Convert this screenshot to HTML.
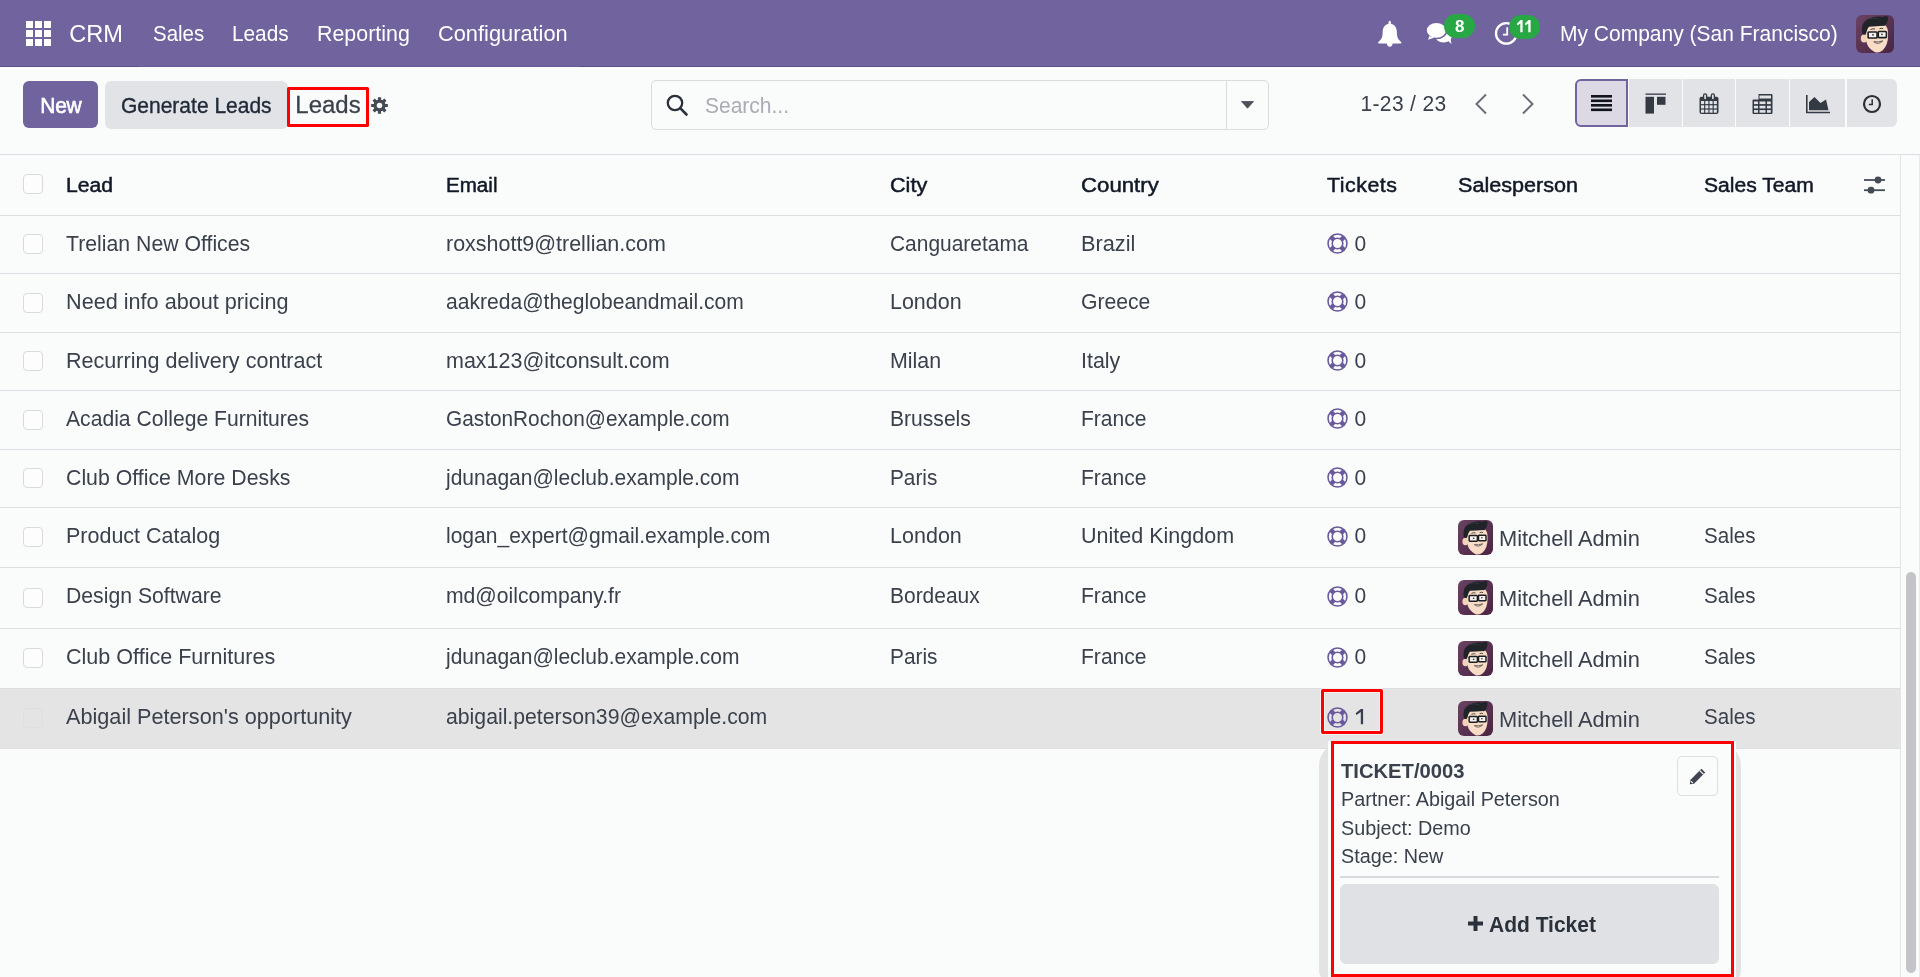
<!DOCTYPE html>
<html><head><meta charset="utf-8">
<style>
html,body{margin:0;padding:0;}
body{width:1920px;height:977px;overflow:hidden;position:relative;background:#fafbfb;font-family:"Liberation Sans", sans-serif;}
.t{position:absolute;white-space:nowrap;line-height:1;}
.abs{position:absolute;}
</style></head><body>

<div class="abs" style="left:0;top:0;width:1920px;height:66px;background:#71639e;border-bottom:1px solid #5c4f86"></div>
<div class="abs" style="left:138px;top:66px;width:442px;height:1px;background:#6a5b98"></div>
<div class="abs" style="left:26px;top:21px;width:7px;height:7px;background:#fff"></div><div class="abs" style="left:35px;top:21px;width:7px;height:7px;background:#fff"></div><div class="abs" style="left:44px;top:21px;width:7px;height:7px;background:#fff"></div><div class="abs" style="left:26px;top:30px;width:7px;height:7px;background:#fff"></div><div class="abs" style="left:35px;top:30px;width:7px;height:7px;background:#fff"></div><div class="abs" style="left:44px;top:30px;width:7px;height:7px;background:#fff"></div><div class="abs" style="left:26px;top:39px;width:7px;height:7px;background:#fff"></div><div class="abs" style="left:35px;top:39px;width:7px;height:7px;background:#fff"></div><div class="abs" style="left:44px;top:39px;width:7px;height:7px;background:#fff"></div>
<div class="t" style="left:69.2px;top:23.42px;font-size:23.6px;color:#fff;font-weight:normal;transform:scale(1.0,1.02);transform-origin:0 19.98px;">CRM</div>
<div class="t" style="left:153px;top:23.12px;font-size:21px;color:#fff;font-weight:normal;transform:scale(0.975,1.035);transform-origin:0 17.78px;">Sales</div>
<div class="t" style="left:232px;top:23.12px;font-size:21px;color:#fff;font-weight:normal;transform:scale(0.99,1.035);transform-origin:0 17.78px;">Leads</div>
<div class="t" style="left:317px;top:23.12px;font-size:21px;color:#fff;font-weight:normal;transform:scale(1.019,1.035);transform-origin:0 17.78px;">Reporting</div>
<div class="t" style="left:438px;top:23.12px;font-size:21px;color:#fff;font-weight:normal;transform:scale(1.038,1.035);transform-origin:0 17.78px;">Configuration</div>
<svg class="abs" style="left:1370px;top:15px" width="40" height="37" viewBox="0 0 40 37"><path fill="#fff" d="M19.7 5.8 C18.7 5.8 18.3 7.3 18.6 8.7 C14.8 9.5 12.9 12.6 12.7 16.5 L12.5 20 C12.3 23 10.6 25.1 8.4 27.1 C7.7 27.7 8.1 28.4 9 28.4 L30.6 28.4 C31.4 28.4 31.8 27.7 31.1 27.1 C28.9 25.1 27.2 23 27 20 L26.8 16.5 C26.6 12.6 24.7 9.5 20.9 8.7 C21.1 7.3 20.8 5.8 19.7 5.8 Z M16.8 28.2 C16.8 30 18.1 31.8 19.75 31.8 C21.4 31.8 22.7 30 22.7 28.2 Z"/></svg>
<svg class="abs" style="left:1420px;top:10px" width="40" height="40" viewBox="0 0 40 40"><ellipse cx="23.5" cy="26" rx="8.6" ry="6.4" fill="#fff"/><path d="M27 30 L31.5 34 L30.5 28.5 Z" fill="#fff"/>
<ellipse cx="16.4" cy="20.3" rx="10.4" ry="8.2" fill="#fff" stroke="#71639e" stroke-width="1.6"/><path d="M9.5 26 L8 29.8 L14.5 27.5 Z" fill="#fff"/></svg>
<div class="abs" style="left:1444px;top:14px;width:31px;height:24px;border-radius:12px;background:#28a745"></div>
<div class="t" style="left:1455px;top:18.21px;font-size:17px;color:#fff;font-weight:bold;transform:scale(1.0,1.001);transform-origin:0 14.39px;">8</div>
<svg class="abs" style="left:1494px;top:21px" width="24" height="24" viewBox="0 0 24 24"><circle cx="12.3" cy="12.4" r="10.3" fill="none" stroke="#fff" stroke-width="2.3"/><path d="M13.2 6.2 V13.6 H8.9" fill="none" stroke="#fff" stroke-width="1.8"/></svg>
<div class="abs" style="left:1509px;top:15px;width:31px;height:24px;border-radius:12px;background:#28a745"></div>
<svg class="abs" style="left:1510px;top:15px" width="30" height="22" viewBox="1510 15 30 22"><path fill="#fff" d="M1517 23.6 L1520.6 20 L1522.6 20 L1522.6 32.3 L1520.3 32.3 L1520.3 23.4 L1517.4 25.6 Z M1525 23.6 L1528.6 20 L1530.6 20 L1530.6 32.3 L1528.3 32.3 L1528.3 23.4 L1525.4 25.6 Z"/></svg>
<div class="t" style="left:1560px;top:23.12px;font-size:21px;color:#fff;font-weight:normal;transform:scale(1.0,1.035);transform-origin:0 17.78px;">My Company (San Francisco)</div>
<svg style="position:absolute;left:1856px;top:15px" width="38" height="38" viewBox="0 0 100 100">
<defs><linearGradient id="ag185615" x1="0" y1="0" x2="1" y2="1"><stop offset="0" stop-color="#6a4262"/><stop offset="1" stop-color="#4b2442"/></linearGradient></defs>
<rect width="100" height="100" rx="15.8" fill="url(#ag185615)"/>
<g transform="translate(52 52) scale(1.07) translate(-54.8 -52.9)">
<ellipse cx="26" cy="62" rx="8" ry="10" fill="#f3d2b9"/>
<path d="M29 40 Q31 30 45 29 L76 28 Q86 34 85 52 Q86 78 72 91 Q62 99 52 95 Q37 88 32 72 Z" fill="#f8dcc6"/>
<path d="M22 50 Q17 26 33 16 Q52 5 72 9 Q80 4 85 9 Q86 18 80 27 Q77 33 73 31 Q56 33 38 33 Q33 38 31 50 Q26 55 22 50 Z" fill="#202328"/>
<path d="M33 14 Q50 10 62 14" stroke="#3a3f47" stroke-width="2" fill="none"/>
<path d="M42 40 Q48 37 53 39" stroke="#2b2d31" stroke-width="2.2" fill="none"/>
<path d="M64 38 Q69 36 73 38" stroke="#2b2d31" stroke-width="2.2" fill="none"/>
<rect x="36" y="46" width="22" height="15" rx="2" fill="#f6f1ec" stroke="#1d1f23" stroke-width="4"/>
<rect x="61" y="45" width="20" height="15" rx="2" fill="#f6f1ec" stroke="#1d1f23" stroke-width="4"/>
<path d="M58 51 L61 51" stroke="#1d1f23" stroke-width="3"/>
<circle cx="48" cy="53" r="2.2" fill="#2a2a2a"/><circle cx="70" cy="52" r="2" fill="#2a2a2a"/>
<path d="M50 70 Q61 79 72 68 Q61 72 50 70 Z" fill="#fff" stroke="#4a3a36" stroke-width="2"/>
</g></svg>
<div class="abs" style="left:0;top:154px;width:1920px;height:1px;background:#dcdee3"></div>
<div class="abs" style="left:23px;top:81px;width:75px;height:47px;border-radius:6px;background:#71639e"></div>
<div class="t" style="left:40.3px;top:95.42px;font-size:21px;color:#fff;font-weight:normal;transform:scale(1.0,1.06);transform-origin:0 17.78px;-webkit-text-stroke:0.6px #fff;letter-spacing:-0.3px;">New</div>
<div class="abs" style="left:105px;top:81px;width:183px;height:48px;border-radius:6px;background:#e2e3e7"></div>
<div class="t" style="left:121px;top:94.72px;font-size:21px;color:#1f2937;font-weight:normal;transform:scale(1.0,1.035);transform-origin:0 17.78px;-webkit-text-stroke:0.35px #1f2937;">Generate Leads</div>
<div class="t" style="left:295.3px;top:93.38px;font-size:24px;color:#3a414c;font-weight:normal;transform:scale(1.0,1.03);transform-origin:0 20.32px;-webkit-text-stroke:0.25px #3a414c;">Leads</div>
<div class="abs" style="left:287px;top:87px;width:76px;height:34px;border:3px solid #ff0000;border-radius:1.5px"></div>
<svg class="abs" style="left:370.2px;top:95.6px" width="19" height="19" viewBox="-10 -10 20 20"><g fill="#454b55"><rect x="-1.7" y="-8.8" width="3.4" height="4" rx="0.4" transform="rotate(0)"/><rect x="-1.7" y="-8.8" width="3.4" height="4" rx="0.4" transform="rotate(45)"/><rect x="-1.7" y="-8.8" width="3.4" height="4" rx="0.4" transform="rotate(90)"/><rect x="-1.7" y="-8.8" width="3.4" height="4" rx="0.4" transform="rotate(135)"/><rect x="-1.7" y="-8.8" width="3.4" height="4" rx="0.4" transform="rotate(180)"/><rect x="-1.7" y="-8.8" width="3.4" height="4" rx="0.4" transform="rotate(225)"/><rect x="-1.7" y="-8.8" width="3.4" height="4" rx="0.4" transform="rotate(270)"/><rect x="-1.7" y="-8.8" width="3.4" height="4" rx="0.4" transform="rotate(315)"/><circle r="6.4"/></g><circle r="2.9" fill="#fafbfb"/></svg>
<div class="abs" style="left:651px;top:80px;width:616px;height:48px;border:1px solid #dadce0;border-radius:5px;background:#fafbfb"></div>
<div class="abs" style="left:1226px;top:81px;width:1px;height:48px;background:#dadce0"></div>
<svg class="abs" style="left:665px;top:93px" width="24" height="24" viewBox="0 0 24 24"><circle cx="10" cy="10" r="7.2" fill="none" stroke="#2b313a" stroke-width="2.3"/><path d="M15.2 15.2 L21.5 21.5" stroke="#2b313a" stroke-width="2.6" stroke-linecap="round"/></svg>
<div class="t" style="left:705px;top:94.92px;font-size:21px;color:#a9acb4;font-weight:normal;transform:scale(1.0,1.035);transform-origin:0 17.78px;">Search...</div>
<svg class="abs" style="left:1241px;top:101px" width="13" height="8" viewBox="0 0 13 8"><path d="M0.5 0.5 H12.5 L6.5 7.2 Z" fill="#4b5058" stroke="#4b5058" stroke-width="0.8" stroke-linejoin="round"/></svg>
<div class="t" style="left:1360.5px;top:93.22px;font-size:21px;color:#3a414c;font-weight:normal;transform:scale(1.0,1.035);transform-origin:0 17.78px;letter-spacing:0.35px;">1-23 / 23</div>
<svg class="abs" style="left:1474px;top:93px" width="14" height="22" viewBox="0 0 14 22"><path d="M12 1.5 L2.5 11 L12 20.5" fill="none" stroke="#6b6f77" stroke-width="2"/></svg>
<svg class="abs" style="left:1521px;top:93px" width="14" height="22" viewBox="0 0 14 22"><path d="M2 1.5 L11.5 11 L2 20.5" fill="none" stroke="#6b6f77" stroke-width="2"/></svg>
<div class="abs" style="left:1575px;top:79px;width:49px;height:44px;border:2px solid #71639e;border-radius:6px 0 0 6px;background:#dcd9e5"></div>
<div class="abs" style="left:1629px;top:79px;width:53px;height:48px;border-radius:0;background:#e2e3e7"></div>
<div class="abs" style="left:1683px;top:79px;width:52px;height:48px;border-radius:0;background:#e2e3e7"></div>
<div class="abs" style="left:1736px;top:79px;width:53px;height:48px;border-radius:0;background:#e2e3e7"></div>
<div class="abs" style="left:1790px;top:79px;width:55px;height:48px;border-radius:0;background:#e2e3e7"></div>
<div class="abs" style="left:1847px;top:79px;width:50px;height:48px;border-radius:0 6px 6px 0;background:#e2e3e7"></div>
<svg class="abs" style="left:1591px;top:95px" width="21" height="17" viewBox="0 0 21 17"><g fill="#111418"><rect x="0" y="0" width="21" height="2.6"/><rect x="0" y="4.5" width="21" height="2.6"/><rect x="0" y="9" width="21" height="2.6"/><rect x="0" y="13.5" width="21" height="2.6"/></g></svg>
<svg class="abs" style="left:1645px;top:93px" width="21" height="21" viewBox="0 0 21 21"><g fill="#343a43"><rect x="0.5" y="0.5" width="20.5" height="1.3"/><rect x="0.5" y="3.8" width="8.5" height="16.8"/><rect x="12" y="3.8" width="8.5" height="8"/></g></svg>
<svg class="abs" style="left:1699px;top:93px" width="20" height="22" viewBox="0 0 20 22"><rect x="0.5" y="3.7" width="19" height="17.3" rx="2" fill="#343a43"/>
<g fill="#e2e3e7"><rect x="2.00" y="8.00" width="3.1" height="3.1"/><rect x="6.25" y="8.00" width="3.1" height="3.1"/><rect x="10.50" y="8.00" width="3.1" height="3.1"/><rect x="14.75" y="8.00" width="3.1" height="3.1"/><rect x="2.00" y="12.30" width="3.1" height="3.1"/><rect x="6.25" y="12.30" width="3.1" height="3.1"/><rect x="10.50" y="12.30" width="3.1" height="3.1"/><rect x="14.75" y="12.30" width="3.1" height="3.1"/><rect x="2.00" y="16.60" width="3.1" height="3.1"/><rect x="6.25" y="16.60" width="3.1" height="3.1"/><rect x="10.50" y="16.60" width="3.1" height="3.1"/><rect x="14.75" y="16.60" width="3.1" height="3.1"/></g>
<rect x="4.6" y="0.8" width="3" height="6" rx="1.5" fill="#e2e3e7" stroke="#343a43" stroke-width="1.3"/><rect x="12.4" y="0.8" width="3" height="6" rx="1.5" fill="#e2e3e7" stroke="#343a43" stroke-width="1.3"/></svg>
<svg class="abs" style="left:1752px;top:93px" width="21" height="21" viewBox="0 0 21 21"><path d="M6.5 1 H19.5 Q20.5 1 20.5 2 V20 Q20.5 21 19.5 21 H1.5 Q0.5 21 0.5 20 V7.5 Q0.5 6.5 1.5 6.5 H6.5 Z" fill="#343a43"/>
<g fill="#e2e3e7"><rect x="7.5" y="2.5" width="11.5" height="3"/><rect x="2" y="8.5" width="4" height="2.6"/><rect x="7.5" y="8.5" width="6" height="2.6"/><rect x="15" y="8.5" width="3.8" height="2.6"/><rect x="2" y="12.8" width="4" height="2.6"/><rect x="7.5" y="12.8" width="6" height="2.6"/><rect x="15" y="12.8" width="3.8" height="2.6"/><rect x="2" y="17.1" width="4" height="2.6"/><rect x="7.5" y="17.1" width="6" height="2.6"/><rect x="15" y="17.1" width="3.8" height="2.6"/></g></svg>
<svg class="abs" style="left:1806px;top:95px" width="25" height="19" viewBox="0 0 25 19"><path d="M0.8 0 V17.5 H24" fill="none" stroke="#343a43" stroke-width="1.6"/><path d="M3 15.2 V7 L8.5 2 L14.5 8 L20 4.5 L22.5 15.2 Z" fill="#343a43"/></svg>
<svg class="abs" style="left:1862px;top:94px" width="20" height="20" viewBox="0 0 20 20"><circle cx="10" cy="10" r="8" fill="none" stroke="#2a2f36" stroke-width="2.2"/><path d="M10.2 5.2 V10.4 H6.8" fill="none" stroke="#2a2f36" stroke-width="1.5"/></svg>
<div class="abs" style="left:0;top:215px;width:1900px;height:1px;background:#dcdee3"></div>
<div class="abs" style="left:0;top:273px;width:1900px;height:1px;background:#dcdee3"></div>
<div class="abs" style="left:0;top:332px;width:1900px;height:1px;background:#dcdee3"></div>
<div class="abs" style="left:0;top:390px;width:1900px;height:1px;background:#dcdee3"></div>
<div class="abs" style="left:0;top:449px;width:1900px;height:1px;background:#dcdee3"></div>
<div class="abs" style="left:0;top:507px;width:1900px;height:1px;background:#dcdee3"></div>
<div class="abs" style="left:0;top:567px;width:1900px;height:1px;background:#dcdee3"></div>
<div class="abs" style="left:0;top:628px;width:1900px;height:1px;background:#dcdee3"></div>
<div class="abs" style="left:0;top:688px;width:1900px;height:1px;background:#dcdee3"></div>
<div class="abs" style="left:0;top:748px;width:1900px;height:1px;background:#dcdee3"></div>
<div class="abs" style="left:0;top:689px;width:1900px;height:59px;background:#e4e4e5"></div>
<div class="abs" style="left:1900px;top:155px;width:1px;height:822px;background:#e4e5e8"></div>
<div class="abs" style="left:1919px;top:155px;width:1px;height:822px;background:#e9eaec"></div>
<div class="abs" style="left:1905.5px;top:572px;width:10.5px;height:401px;border-radius:5.25px;background:#c4c3c8"></div>
<div class="t" style="left:66px;top:173.82px;font-size:21px;color:#111827;font-weight:normal;transform:scale(1.0066,1.001);transform-origin:0 17.78px;-webkit-text-stroke:0.5px #111827;">Lead</div>
<div class="t" style="left:446px;top:173.82px;font-size:21px;color:#111827;font-weight:normal;transform:scale(0.98,1.001);transform-origin:0 17.78px;-webkit-text-stroke:0.5px #111827;">Email</div>
<div class="t" style="left:890px;top:173.82px;font-size:21px;color:#111827;font-weight:normal;transform:scale(1.03,1.001);transform-origin:0 17.78px;-webkit-text-stroke:0.5px #111827;">City</div>
<div class="t" style="left:1081px;top:173.82px;font-size:21px;color:#111827;font-weight:normal;transform:scale(1.058,1.001);transform-origin:0 17.78px;-webkit-text-stroke:0.5px #111827;">Country</div>
<div class="t" style="left:1327px;top:173.82px;font-size:21px;color:#111827;font-weight:normal;transform:scale(1.0175,1.001);transform-origin:0 17.78px;-webkit-text-stroke:0.5px #111827;letter-spacing:0.5px;">Tickets</div>
<div class="t" style="left:1458px;top:173.82px;font-size:21px;color:#111827;font-weight:normal;transform:scale(1.028,1.001);transform-origin:0 17.78px;-webkit-text-stroke:0.5px #111827;">Salesperson</div>
<div class="t" style="left:1704px;top:173.82px;font-size:21px;color:#111827;font-weight:normal;transform:scale(1.005,1.001);transform-origin:0 17.78px;-webkit-text-stroke:0.5px #111827;">Sales Team</div>
<div class="abs" style="left:23px;top:174px;width:18px;height:18px;border:1px solid #d8dade;border-radius:4px;background:#fdfdfd"></div>
<svg class="abs" style="left:1862px;top:175px" width="24" height="20" viewBox="0 0 24 20"><g stroke="#454b55" stroke-width="1.8"><path d="M2 5 H23"/><path d="M2 15.2 H23"/></g><circle cx="16" cy="5" r="3.4" fill="#454b55"/><circle cx="9" cy="15.2" r="3.4" fill="#454b55"/></svg>
<div class="abs" style="left:23px;top:234.0px;width:18px;height:18px;border:1px solid #d8dade;border-radius:4px;background:#fdfdfd;"></div>
<div class="t" style="left:66px;top:232.52px;font-size:21px;color:#3a414c;font-weight:normal;transform:scale(1.0116,1.035);transform-origin:0 17.78px;">Trelian New Offices</div>
<div class="t" style="left:446px;top:232.52px;font-size:21px;color:#3a414c;font-weight:normal;transform:scale(1.022,1.035);transform-origin:0 17.78px;">roxshott9@trellian.com</div>
<div class="t" style="left:890px;top:232.52px;font-size:21px;color:#3a414c;font-weight:normal;transform:scale(0.9971,1.035);transform-origin:0 17.78px;">Canguaretama</div>
<div class="t" style="left:1081px;top:232.52px;font-size:21px;color:#3a414c;font-weight:normal;transform:scale(1.0337,1.035);transform-origin:0 17.78px;">Brazil</div>
<svg style="position:absolute;left:1327px;top:232.7px" width="21" height="21" viewBox="0 0 21 21">
<defs><mask id="lm" maskUnits="userSpaceOnUse" x="0" y="0" width="21" height="21"><rect width="21" height="21" fill="#fff"/><circle cx="10.5" cy="10.5" r="7.37" fill="none" stroke="#000" stroke-width="2.6"/>
<g transform="rotate(45 10.5 10.5)" fill="#fff"><rect x="8.3" y="0" width="4.4" height="21"/><rect x="0" y="8.3" width="21" height="4.4"/></g></mask></defs>
<circle cx="10.5" cy="10.5" r="7.375" fill="none" stroke="#6a5a9c" stroke-width="5.75" mask="url(#lm)"/>
</svg>
<div class="t" style="left:1354.5px;top:232.52px;font-size:21px;color:#3a414c;font-weight:normal;transform:scale(1.0,1.035);transform-origin:0 17.78px;">0</div>
<div class="abs" style="left:23px;top:292.5px;width:18px;height:18px;border:1px solid #d8dade;border-radius:4px;background:#fdfdfd;"></div>
<div class="t" style="left:66px;top:290.52px;font-size:21px;color:#3a414c;font-weight:normal;transform:scale(1.0303,1.035);transform-origin:0 17.78px;">Need info about pricing</div>
<div class="t" style="left:446px;top:290.52px;font-size:21px;color:#3a414c;font-weight:normal;transform:scale(1.0034,1.035);transform-origin:0 17.78px;">aakreda@theglobeandmail.com</div>
<div class="t" style="left:890px;top:290.52px;font-size:21px;color:#3a414c;font-weight:normal;transform:scale(1.0219,1.035);transform-origin:0 17.78px;">London</div>
<div class="t" style="left:1081px;top:290.52px;font-size:21px;color:#3a414c;font-weight:normal;transform:scale(1.0074,1.035);transform-origin:0 17.78px;">Greece</div>
<svg style="position:absolute;left:1327px;top:291.2px" width="21" height="21" viewBox="0 0 21 21">
<defs><mask id="lm" maskUnits="userSpaceOnUse" x="0" y="0" width="21" height="21"><rect width="21" height="21" fill="#fff"/><circle cx="10.5" cy="10.5" r="7.37" fill="none" stroke="#000" stroke-width="2.6"/>
<g transform="rotate(45 10.5 10.5)" fill="#fff"><rect x="8.3" y="0" width="4.4" height="21"/><rect x="0" y="8.3" width="21" height="4.4"/></g></mask></defs>
<circle cx="10.5" cy="10.5" r="7.375" fill="none" stroke="#6a5a9c" stroke-width="5.75" mask="url(#lm)"/>
</svg>
<div class="t" style="left:1354.5px;top:290.52px;font-size:21px;color:#3a414c;font-weight:normal;transform:scale(1.0,1.035);transform-origin:0 17.78px;">0</div>
<div class="abs" style="left:23px;top:351.0px;width:18px;height:18px;border:1px solid #d8dade;border-radius:4px;background:#fdfdfd;"></div>
<div class="t" style="left:66px;top:349.52px;font-size:21px;color:#3a414c;font-weight:normal;transform:scale(1.0261,1.035);transform-origin:0 17.78px;">Recurring delivery contract</div>
<div class="t" style="left:446px;top:349.52px;font-size:21px;color:#3a414c;font-weight:normal;transform:scale(1.023,1.035);transform-origin:0 17.78px;">max123@itconsult.com</div>
<div class="t" style="left:890px;top:349.52px;font-size:21px;color:#3a414c;font-weight:normal;transform:scale(1.0186,1.035);transform-origin:0 17.78px;">Milan</div>
<div class="t" style="left:1081px;top:349.52px;font-size:21px;color:#3a414c;font-weight:normal;transform:scale(1.0182,1.035);transform-origin:0 17.78px;">Italy</div>
<svg style="position:absolute;left:1327px;top:349.7px" width="21" height="21" viewBox="0 0 21 21">
<defs><mask id="lm" maskUnits="userSpaceOnUse" x="0" y="0" width="21" height="21"><rect width="21" height="21" fill="#fff"/><circle cx="10.5" cy="10.5" r="7.37" fill="none" stroke="#000" stroke-width="2.6"/>
<g transform="rotate(45 10.5 10.5)" fill="#fff"><rect x="8.3" y="0" width="4.4" height="21"/><rect x="0" y="8.3" width="21" height="4.4"/></g></mask></defs>
<circle cx="10.5" cy="10.5" r="7.375" fill="none" stroke="#6a5a9c" stroke-width="5.75" mask="url(#lm)"/>
</svg>
<div class="t" style="left:1354.5px;top:349.52px;font-size:21px;color:#3a414c;font-weight:normal;transform:scale(1.0,1.035);transform-origin:0 17.78px;">0</div>
<div class="abs" style="left:23px;top:409.5px;width:18px;height:18px;border:1px solid #d8dade;border-radius:4px;background:#fdfdfd;"></div>
<div class="t" style="left:66px;top:407.52px;font-size:21px;color:#3a414c;font-weight:normal;transform:scale(1.0062,1.035);transform-origin:0 17.78px;">Acadia College Furnitures</div>
<div class="t" style="left:446px;top:407.52px;font-size:21px;color:#3a414c;font-weight:normal;transform:scale(0.9909,1.035);transform-origin:0 17.78px;">GastonRochon@example.com</div>
<div class="t" style="left:890px;top:407.52px;font-size:21px;color:#3a414c;font-weight:normal;transform:scale(1.0038,1.035);transform-origin:0 17.78px;">Brussels</div>
<div class="t" style="left:1081px;top:407.52px;font-size:21px;color:#3a414c;font-weight:normal;transform:scale(1.0016,1.035);transform-origin:0 17.78px;">France</div>
<svg style="position:absolute;left:1327px;top:408.2px" width="21" height="21" viewBox="0 0 21 21">
<defs><mask id="lm" maskUnits="userSpaceOnUse" x="0" y="0" width="21" height="21"><rect width="21" height="21" fill="#fff"/><circle cx="10.5" cy="10.5" r="7.37" fill="none" stroke="#000" stroke-width="2.6"/>
<g transform="rotate(45 10.5 10.5)" fill="#fff"><rect x="8.3" y="0" width="4.4" height="21"/><rect x="0" y="8.3" width="21" height="4.4"/></g></mask></defs>
<circle cx="10.5" cy="10.5" r="7.375" fill="none" stroke="#6a5a9c" stroke-width="5.75" mask="url(#lm)"/>
</svg>
<div class="t" style="left:1354.5px;top:407.52px;font-size:21px;color:#3a414c;font-weight:normal;transform:scale(1.0,1.035);transform-origin:0 17.78px;">0</div>
<div class="abs" style="left:23px;top:468.0px;width:18px;height:18px;border:1px solid #d8dade;border-radius:4px;background:#fdfdfd;"></div>
<div class="t" style="left:66px;top:466.52px;font-size:21px;color:#3a414c;font-weight:normal;transform:scale(1.0141,1.035);transform-origin:0 17.78px;">Club Office More Desks</div>
<div class="t" style="left:446px;top:466.52px;font-size:21px;color:#3a414c;font-weight:normal;transform:scale(1.0007,1.035);transform-origin:0 17.78px;">jdunagan@leclub.example.com</div>
<div class="t" style="left:890px;top:466.52px;font-size:21px;color:#3a414c;font-weight:normal;transform:scale(0.9892,1.035);transform-origin:0 17.78px;">Paris</div>
<div class="t" style="left:1081px;top:466.52px;font-size:21px;color:#3a414c;font-weight:normal;transform:scale(1.0016,1.035);transform-origin:0 17.78px;">France</div>
<svg style="position:absolute;left:1327px;top:466.7px" width="21" height="21" viewBox="0 0 21 21">
<defs><mask id="lm" maskUnits="userSpaceOnUse" x="0" y="0" width="21" height="21"><rect width="21" height="21" fill="#fff"/><circle cx="10.5" cy="10.5" r="7.37" fill="none" stroke="#000" stroke-width="2.6"/>
<g transform="rotate(45 10.5 10.5)" fill="#fff"><rect x="8.3" y="0" width="4.4" height="21"/><rect x="0" y="8.3" width="21" height="4.4"/></g></mask></defs>
<circle cx="10.5" cy="10.5" r="7.375" fill="none" stroke="#6a5a9c" stroke-width="5.75" mask="url(#lm)"/>
</svg>
<div class="t" style="left:1354.5px;top:466.52px;font-size:21px;color:#3a414c;font-weight:normal;transform:scale(1.0,1.035);transform-origin:0 17.78px;">0</div>
<div class="abs" style="left:23px;top:527.0px;width:18px;height:18px;border:1px solid #d8dade;border-radius:4px;background:#fdfdfd;"></div>
<div class="t" style="left:66px;top:524.92px;font-size:21px;color:#3a414c;font-weight:normal;transform:scale(1.0234,1.035);transform-origin:0 17.78px;">Product Catalog</div>
<div class="t" style="left:446px;top:524.92px;font-size:21px;color:#3a414c;font-weight:normal;transform:scale(1.0016,1.035);transform-origin:0 17.78px;">logan_expert@gmail.example.com</div>
<div class="t" style="left:890px;top:524.92px;font-size:21px;color:#3a414c;font-weight:normal;transform:scale(1.0248,1.035);transform-origin:0 17.78px;">London</div>
<div class="t" style="left:1081px;top:524.92px;font-size:21px;color:#3a414c;font-weight:normal;transform:scale(1.0249,1.035);transform-origin:0 17.78px;">United Kingdom</div>
<svg style="position:absolute;left:1327px;top:525.7px" width="21" height="21" viewBox="0 0 21 21">
<defs><mask id="lm" maskUnits="userSpaceOnUse" x="0" y="0" width="21" height="21"><rect width="21" height="21" fill="#fff"/><circle cx="10.5" cy="10.5" r="7.37" fill="none" stroke="#000" stroke-width="2.6"/>
<g transform="rotate(45 10.5 10.5)" fill="#fff"><rect x="8.3" y="0" width="4.4" height="21"/><rect x="0" y="8.3" width="21" height="4.4"/></g></mask></defs>
<circle cx="10.5" cy="10.5" r="7.375" fill="none" stroke="#6a5a9c" stroke-width="5.75" mask="url(#lm)"/>
</svg>
<div class="t" style="left:1354.5px;top:524.92px;font-size:21px;color:#3a414c;font-weight:normal;transform:scale(1.0,1.035);transform-origin:0 17.78px;">0</div>
<svg style="position:absolute;left:1458px;top:520px" width="35" height="35" viewBox="0 0 100 100">
<defs><linearGradient id="ag1458520" x1="0" y1="0" x2="1" y2="1"><stop offset="0" stop-color="#6a4262"/><stop offset="1" stop-color="#4b2442"/></linearGradient></defs>
<rect width="100" height="100" rx="17.1" fill="url(#ag1458520)"/>
<g transform="translate(52 52) scale(1.07) translate(-54.8 -52.9)">
<ellipse cx="26" cy="62" rx="8" ry="10" fill="#f3d2b9"/>
<path d="M29 40 Q31 30 45 29 L76 28 Q86 34 85 52 Q86 78 72 91 Q62 99 52 95 Q37 88 32 72 Z" fill="#f8dcc6"/>
<path d="M22 50 Q17 26 33 16 Q52 5 72 9 Q80 4 85 9 Q86 18 80 27 Q77 33 73 31 Q56 33 38 33 Q33 38 31 50 Q26 55 22 50 Z" fill="#202328"/>
<path d="M33 14 Q50 10 62 14" stroke="#3a3f47" stroke-width="2" fill="none"/>
<path d="M42 40 Q48 37 53 39" stroke="#2b2d31" stroke-width="2.2" fill="none"/>
<path d="M64 38 Q69 36 73 38" stroke="#2b2d31" stroke-width="2.2" fill="none"/>
<rect x="36" y="46" width="22" height="15" rx="2" fill="#f6f1ec" stroke="#1d1f23" stroke-width="4"/>
<rect x="61" y="45" width="20" height="15" rx="2" fill="#f6f1ec" stroke="#1d1f23" stroke-width="4"/>
<path d="M58 51 L61 51" stroke="#1d1f23" stroke-width="3"/>
<circle cx="48" cy="53" r="2.2" fill="#2a2a2a"/><circle cx="70" cy="52" r="2" fill="#2a2a2a"/>
<path d="M50 70 Q61 79 72 68 Q61 72 50 70 Z" fill="#fff" stroke="#4a3a36" stroke-width="2"/>
</g></svg>
<div class="t" style="left:1499px;top:527.72px;font-size:21px;color:#3a414c;font-weight:normal;transform:scale(1.04,1.035);transform-origin:0 17.78px;">Mitchell Admin</div>
<div class="t" style="left:1704px;top:524.92px;font-size:21px;color:#3a414c;font-weight:normal;transform:scale(0.98,1.035);transform-origin:0 17.78px;">Sales</div>
<div class="abs" style="left:23px;top:587.5px;width:18px;height:18px;border:1px solid #d8dade;border-radius:4px;background:#fdfdfd;"></div>
<div class="t" style="left:66px;top:584.92px;font-size:21px;color:#3a414c;font-weight:normal;transform:scale(1.0098,1.035);transform-origin:0 17.78px;">Design Software</div>
<div class="t" style="left:446px;top:584.92px;font-size:21px;color:#3a414c;font-weight:normal;transform:scale(1.0069,1.035);transform-origin:0 17.78px;">md@oilcompany.fr</div>
<div class="t" style="left:890px;top:584.92px;font-size:21px;color:#3a414c;font-weight:normal;transform:scale(0.9978,1.035);transform-origin:0 17.78px;">Bordeaux</div>
<div class="t" style="left:1081px;top:584.92px;font-size:21px;color:#3a414c;font-weight:normal;transform:scale(1.0031,1.035);transform-origin:0 17.78px;">France</div>
<svg style="position:absolute;left:1327px;top:586.2px" width="21" height="21" viewBox="0 0 21 21">
<defs><mask id="lm" maskUnits="userSpaceOnUse" x="0" y="0" width="21" height="21"><rect width="21" height="21" fill="#fff"/><circle cx="10.5" cy="10.5" r="7.37" fill="none" stroke="#000" stroke-width="2.6"/>
<g transform="rotate(45 10.5 10.5)" fill="#fff"><rect x="8.3" y="0" width="4.4" height="21"/><rect x="0" y="8.3" width="21" height="4.4"/></g></mask></defs>
<circle cx="10.5" cy="10.5" r="7.375" fill="none" stroke="#6a5a9c" stroke-width="5.75" mask="url(#lm)"/>
</svg>
<div class="t" style="left:1354.5px;top:584.92px;font-size:21px;color:#3a414c;font-weight:normal;transform:scale(1.0,1.035);transform-origin:0 17.78px;">0</div>
<svg style="position:absolute;left:1458px;top:580px" width="35" height="35" viewBox="0 0 100 100">
<defs><linearGradient id="ag1458580" x1="0" y1="0" x2="1" y2="1"><stop offset="0" stop-color="#6a4262"/><stop offset="1" stop-color="#4b2442"/></linearGradient></defs>
<rect width="100" height="100" rx="17.1" fill="url(#ag1458580)"/>
<g transform="translate(52 52) scale(1.07) translate(-54.8 -52.9)">
<ellipse cx="26" cy="62" rx="8" ry="10" fill="#f3d2b9"/>
<path d="M29 40 Q31 30 45 29 L76 28 Q86 34 85 52 Q86 78 72 91 Q62 99 52 95 Q37 88 32 72 Z" fill="#f8dcc6"/>
<path d="M22 50 Q17 26 33 16 Q52 5 72 9 Q80 4 85 9 Q86 18 80 27 Q77 33 73 31 Q56 33 38 33 Q33 38 31 50 Q26 55 22 50 Z" fill="#202328"/>
<path d="M33 14 Q50 10 62 14" stroke="#3a3f47" stroke-width="2" fill="none"/>
<path d="M42 40 Q48 37 53 39" stroke="#2b2d31" stroke-width="2.2" fill="none"/>
<path d="M64 38 Q69 36 73 38" stroke="#2b2d31" stroke-width="2.2" fill="none"/>
<rect x="36" y="46" width="22" height="15" rx="2" fill="#f6f1ec" stroke="#1d1f23" stroke-width="4"/>
<rect x="61" y="45" width="20" height="15" rx="2" fill="#f6f1ec" stroke="#1d1f23" stroke-width="4"/>
<path d="M58 51 L61 51" stroke="#1d1f23" stroke-width="3"/>
<circle cx="48" cy="53" r="2.2" fill="#2a2a2a"/><circle cx="70" cy="52" r="2" fill="#2a2a2a"/>
<path d="M50 70 Q61 79 72 68 Q61 72 50 70 Z" fill="#fff" stroke="#4a3a36" stroke-width="2"/>
</g></svg>
<div class="t" style="left:1499px;top:587.72px;font-size:21px;color:#3a414c;font-weight:normal;transform:scale(1.04,1.035);transform-origin:0 17.78px;">Mitchell Admin</div>
<div class="t" style="left:1704px;top:584.92px;font-size:21px;color:#3a414c;font-weight:normal;transform:scale(0.98,1.035);transform-origin:0 17.78px;">Sales</div>
<div class="abs" style="left:23px;top:648.0px;width:18px;height:18px;border:1px solid #d8dade;border-radius:4px;background:#fdfdfd;"></div>
<div class="t" style="left:66px;top:645.92px;font-size:21px;color:#3a414c;font-weight:normal;transform:scale(1.0262,1.035);transform-origin:0 17.78px;">Club Office Furnitures</div>
<div class="t" style="left:446px;top:645.92px;font-size:21px;color:#3a414c;font-weight:normal;transform:scale(1.0003,1.035);transform-origin:0 17.78px;">jdunagan@leclub.example.com</div>
<div class="t" style="left:890px;top:645.92px;font-size:21px;color:#3a414c;font-weight:normal;transform:scale(0.9914,1.035);transform-origin:0 17.78px;">Paris</div>
<div class="t" style="left:1081px;top:645.92px;font-size:21px;color:#3a414c;font-weight:normal;transform:scale(1.0031,1.035);transform-origin:0 17.78px;">France</div>
<svg style="position:absolute;left:1327px;top:646.7px" width="21" height="21" viewBox="0 0 21 21">
<defs><mask id="lm" maskUnits="userSpaceOnUse" x="0" y="0" width="21" height="21"><rect width="21" height="21" fill="#fff"/><circle cx="10.5" cy="10.5" r="7.37" fill="none" stroke="#000" stroke-width="2.6"/>
<g transform="rotate(45 10.5 10.5)" fill="#fff"><rect x="8.3" y="0" width="4.4" height="21"/><rect x="0" y="8.3" width="21" height="4.4"/></g></mask></defs>
<circle cx="10.5" cy="10.5" r="7.375" fill="none" stroke="#6a5a9c" stroke-width="5.75" mask="url(#lm)"/>
</svg>
<div class="t" style="left:1354.5px;top:645.92px;font-size:21px;color:#3a414c;font-weight:normal;transform:scale(1.0,1.035);transform-origin:0 17.78px;">0</div>
<svg style="position:absolute;left:1458px;top:641px" width="35" height="35" viewBox="0 0 100 100">
<defs><linearGradient id="ag1458641" x1="0" y1="0" x2="1" y2="1"><stop offset="0" stop-color="#6a4262"/><stop offset="1" stop-color="#4b2442"/></linearGradient></defs>
<rect width="100" height="100" rx="17.1" fill="url(#ag1458641)"/>
<g transform="translate(52 52) scale(1.07) translate(-54.8 -52.9)">
<ellipse cx="26" cy="62" rx="8" ry="10" fill="#f3d2b9"/>
<path d="M29 40 Q31 30 45 29 L76 28 Q86 34 85 52 Q86 78 72 91 Q62 99 52 95 Q37 88 32 72 Z" fill="#f8dcc6"/>
<path d="M22 50 Q17 26 33 16 Q52 5 72 9 Q80 4 85 9 Q86 18 80 27 Q77 33 73 31 Q56 33 38 33 Q33 38 31 50 Q26 55 22 50 Z" fill="#202328"/>
<path d="M33 14 Q50 10 62 14" stroke="#3a3f47" stroke-width="2" fill="none"/>
<path d="M42 40 Q48 37 53 39" stroke="#2b2d31" stroke-width="2.2" fill="none"/>
<path d="M64 38 Q69 36 73 38" stroke="#2b2d31" stroke-width="2.2" fill="none"/>
<rect x="36" y="46" width="22" height="15" rx="2" fill="#f6f1ec" stroke="#1d1f23" stroke-width="4"/>
<rect x="61" y="45" width="20" height="15" rx="2" fill="#f6f1ec" stroke="#1d1f23" stroke-width="4"/>
<path d="M58 51 L61 51" stroke="#1d1f23" stroke-width="3"/>
<circle cx="48" cy="53" r="2.2" fill="#2a2a2a"/><circle cx="70" cy="52" r="2" fill="#2a2a2a"/>
<path d="M50 70 Q61 79 72 68 Q61 72 50 70 Z" fill="#fff" stroke="#4a3a36" stroke-width="2"/>
</g></svg>
<div class="t" style="left:1499px;top:648.72px;font-size:21px;color:#3a414c;font-weight:normal;transform:scale(1.04,1.035);transform-origin:0 17.78px;">Mitchell Admin</div>
<div class="t" style="left:1704px;top:645.92px;font-size:21px;color:#3a414c;font-weight:normal;transform:scale(0.98,1.035);transform-origin:0 17.78px;">Sales</div>
<div class="abs" style="left:23px;top:708.0px;width:18px;height:18px;border:1px solid #d8dade;border-radius:4px;background:transparent;opacity:.5"></div>
<div class="t" style="left:66px;top:705.92px;font-size:21px;color:#3a414c;font-weight:normal;transform:scale(1.0316,1.035);transform-origin:0 17.78px;">Abigail Peterson's opportunity</div>
<div class="t" style="left:446px;top:705.92px;font-size:21px;color:#3a414c;font-weight:normal;transform:scale(1.0107,1.035);transform-origin:0 17.78px;">abigail.peterson39@example.com</div>
<svg style="position:absolute;left:1327px;top:706.7px" width="21" height="21" viewBox="0 0 21 21">
<defs><mask id="lm" maskUnits="userSpaceOnUse" x="0" y="0" width="21" height="21"><rect width="21" height="21" fill="#fff"/><circle cx="10.5" cy="10.5" r="7.37" fill="none" stroke="#000" stroke-width="2.6"/>
<g transform="rotate(45 10.5 10.5)" fill="#fff"><rect x="8.3" y="0" width="4.4" height="21"/><rect x="0" y="8.3" width="21" height="4.4"/></g></mask></defs>
<circle cx="10.5" cy="10.5" r="7.375" fill="none" stroke="#6a5a9c" stroke-width="5.75" mask="url(#lm)"/>
</svg>
<svg class="abs" style="left:1350px;top:705px" width="20" height="24" viewBox="1350 705 20 24"><path fill="#3a414c" d="M1355.6 713.2 L1360.8 708.9 L1363.1 708.9 L1363.1 724.2 L1360.8 724.2 L1360.8 712.0 L1356.5 715.0 Z"/></svg>
<svg style="position:absolute;left:1458px;top:701px" width="35" height="35" viewBox="0 0 100 100">
<defs><linearGradient id="ag1458701" x1="0" y1="0" x2="1" y2="1"><stop offset="0" stop-color="#6a4262"/><stop offset="1" stop-color="#4b2442"/></linearGradient></defs>
<rect width="100" height="100" rx="17.1" fill="url(#ag1458701)"/>
<g transform="translate(52 52) scale(1.07) translate(-54.8 -52.9)">
<ellipse cx="26" cy="62" rx="8" ry="10" fill="#f3d2b9"/>
<path d="M29 40 Q31 30 45 29 L76 28 Q86 34 85 52 Q86 78 72 91 Q62 99 52 95 Q37 88 32 72 Z" fill="#f8dcc6"/>
<path d="M22 50 Q17 26 33 16 Q52 5 72 9 Q80 4 85 9 Q86 18 80 27 Q77 33 73 31 Q56 33 38 33 Q33 38 31 50 Q26 55 22 50 Z" fill="#202328"/>
<path d="M33 14 Q50 10 62 14" stroke="#3a3f47" stroke-width="2" fill="none"/>
<path d="M42 40 Q48 37 53 39" stroke="#2b2d31" stroke-width="2.2" fill="none"/>
<path d="M64 38 Q69 36 73 38" stroke="#2b2d31" stroke-width="2.2" fill="none"/>
<rect x="36" y="46" width="22" height="15" rx="2" fill="#f6f1ec" stroke="#1d1f23" stroke-width="4"/>
<rect x="61" y="45" width="20" height="15" rx="2" fill="#f6f1ec" stroke="#1d1f23" stroke-width="4"/>
<path d="M58 51 L61 51" stroke="#1d1f23" stroke-width="3"/>
<circle cx="48" cy="53" r="2.2" fill="#2a2a2a"/><circle cx="70" cy="52" r="2" fill="#2a2a2a"/>
<path d="M50 70 Q61 79 72 68 Q61 72 50 70 Z" fill="#fff" stroke="#4a3a36" stroke-width="2"/>
</g></svg>
<div class="t" style="left:1499px;top:708.72px;font-size:21px;color:#3a414c;font-weight:normal;transform:scale(1.04,1.035);transform-origin:0 17.78px;">Mitchell Admin</div>
<div class="t" style="left:1704px;top:705.92px;font-size:21px;color:#3a414c;font-weight:normal;transform:scale(0.98,1.035);transform-origin:0 17.78px;">Sales</div>
<div class="abs" style="left:1321px;top:689px;width:56px;height:39px;border:3px solid #ff0000;border-radius:2px;box-shadow:0 0 0 1px rgba(255,255,255,0.6), inset 0 0 0 1px rgba(255,255,255,0.6)"></div>
<div class="abs" style="left:1319px;top:742px;width:422px;height:242px;border-radius:24px 24px 14px 14px;background:#e3e3e4"></div>
<div class="abs" style="left:1327.6px;top:741px;width:408px;height:260px;background:#fafbfb"></div>
<div class="abs" style="left:1330.5px;top:741px;width:397px;height:230px;border:3px solid #ff0000"></div>
<div class="t" style="left:1341px;top:761.10px;font-size:20.2px;color:#3a414c;font-weight:bold;transform:scale(1.0,1.001);transform-origin:0 17.10px;">TICKET/0003</div>
<div class="t" style="left:1341px;top:790.44px;font-size:19.8px;color:#3a414c;font-weight:normal;transform:scale(1.0,1.02);transform-origin:0 16.76px;">Partner: Abigail Peterson</div>
<div class="t" style="left:1341px;top:819.04px;font-size:19.8px;color:#3a414c;font-weight:normal;transform:scale(1.0,1.02);transform-origin:0 16.76px;">Subject: Demo</div>
<div class="t" style="left:1341px;top:847.04px;font-size:19.8px;color:#3a414c;font-weight:normal;transform:scale(1.0,1.02);transform-origin:0 16.76px;">Stage: New</div>
<div class="abs" style="left:1677px;top:756px;width:39px;height:38px;border:1px solid #dcdee2;border-radius:5px;background:#fafbfb"></div>
<svg class="abs" style="left:1689px;top:768px" width="17" height="17" viewBox="0 0 17 17"><path d="M12.5 0.8 L16.2 4.5 L5 15.7 L0.8 16.2 L1.3 12 Z" fill="#3f4550"/><path d="M10.8 2.6 L14.4 6.2" stroke="#fafbfb" stroke-width="1.2"/><path d="M1.8 13.2 L3.8 15.2" stroke="#fafbfb" stroke-width="1.2"/></svg>
<div class="abs" style="left:1340px;top:876px;width:379px;height:1.5px;background:#d8dade"></div>
<div class="abs" style="left:1340px;top:884px;width:379px;height:80px;border-radius:6px;background:#dfe1e5"></div>
<svg class="abs" style="left:1467px;top:915px" width="17" height="17" viewBox="0 0 17 17"><path d="M8.5 1 V16 M1 8.5 H16" stroke="#2b313a" stroke-width="4"/></svg>
<div class="t" style="left:1489px;top:913.82px;font-size:21px;color:#2b313a;font-weight:bold;transform:scale(1.0,1.035);transform-origin:0 17.78px;">Add Ticket</div>
</body></html>
